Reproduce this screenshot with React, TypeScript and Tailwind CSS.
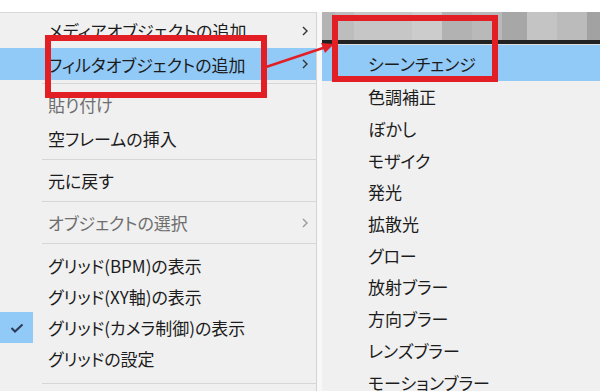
import type { ReactNode } from 'react';

const font = "font-['Noto_Sans_CJK_JP','Noto_Sans',sans-serif] [font-feature-settings:'palt']";

function Chevron({ dim }: { dim?: boolean }) {
  return (
    <svg width="8" height="11" viewBox="0 0 8 11" className="absolute left-[301px] top-1/2 -translate-y-1/2">
      <polyline points="2,1.5 6,5.5 2,9.5" fill="none" stroke={dim ? '#9a9a9a' : '#333'} strokeWidth="1.4" />
    </svg>
  );
}

function Item({ children, h, dim, hi, sub, check }: { children: ReactNode; h: string; dim?: boolean; hi?: boolean; sub?: boolean; check?: boolean }) {
  return (
    <div className={`relative shrink-0 flex items-center pl-[48px] ${h} ${hi ? 'bg-[#91c9f7]' : ''}`}>
      {check && (
        <div className="absolute left-0 top-0 bottom-0 w-[33px] bg-[#91c9f7] flex items-center justify-center">
          <svg width="14" height="10" viewBox="0 0 14 10">
            <polyline points="1.5,5 5,8.5 12.5,1.5" fill="none" stroke="#2b3a55" strokeWidth="2" />
          </svg>
        </div>
      )}
      <span className={`text-[17px] leading-none whitespace-nowrap ${dim ? 'text-[#6e6e6e]' : 'text-[#1c1c1c]'}`}>{children}</span>
      {sub && <Chevron dim={dim} />}
    </div>
  );
}

function Sep({ h, at }: { h: string; at: string }) {
  return (
    <div className={`relative shrink-0 ${h}`}>
      <div className={`absolute left-[42px] right-0 h-px bg-[#d7d7d7] ${at}`} />
    </div>
  );
}

const filters = ['色調補正', 'ぼかし', 'モザイク', '発光', '拡散光', 'グロー', '放射ブラー', '方向ブラー', 'レンズブラー', 'モーションブラー'];
const blocks = [
  ['w-[13px]', 'bg-[#b4b4b4]'],
  ['w-[19px]', 'bg-[#bdbdbd]'],
  ['w-[58px]', 'bg-[#c6c6c6]'],
  ['w-[30px]', 'bg-[#cccccc]'],
  ['w-[30px]', 'bg-[#b2b2b2]'],
  ['w-[30px]', 'bg-[#b9b9b9]'],
  ['w-[25px]', 'bg-[#a7a7a7]'],
  ['w-[30px]', 'bg-[#c4c4c4]'],
  ['w-[30px]', 'bg-[#bbbbbb]'],
  ['flex-1', 'bg-[#a2a2a2]'],
];

export default function App() {
  return (
    <div className={`relative w-[600px] h-[391px] overflow-hidden bg-white ${font}`}>
      <div className="h-[12px]" />
      <div className="flex h-[379px]">
        {/* main context menu */}
        <div className="w-[316px] bg-[#f0f0f0] border-t border-[#d9d9d9] flex flex-col">
          <Item h="h-[35px]" sub>メディアオブジェクトの追加</Item>
          <Item h="h-[32px]" hi sub>フィルタオブジェクトの追加</Item>
          <Sep h="h-[8px]" at="top-[3px]" />
          <Item h="h-[33px]" dim>貼り付け</Item>
          <Item h="h-[34px]">空フレームの挿入</Item>
          <Sep h="h-[9px]" at="top-[4px]" />
          <Item h="h-[33px]">元に戻す</Item>
          <Sep h="h-[9px]" at="top-[4px]" />
          <Item h="h-[33px]" dim sub>オブジェクトの選択</Item>
          <Sep h="h-[11px]" at="top-[4px]" />
          <Item h="h-[31px]">グリッド(BPM)の表示</Item>
          <Item h="h-[31px]">グリッド(XY軸)の表示</Item>
          <Item h="h-[31px]" check>グリッド(カメラ制御)の表示</Item>
          <Item h="h-[31px]">グリッドの設定</Item>
          <Sep h="h-[12px]" at="top-[9px]" />
        </div>
        <div className="w-px bg-[#d4d4d4]" />
        <div className="w-[5px] bg-[#f8f8f8]" />
        {/* filter submenu */}
        <div className="flex-1 bg-[#f0f0f0] flex flex-col overflow-hidden">
          <div className="flex h-[28px] shrink-0">
            {blocks.map(([w, c], i) => (
              <div key={i} className={`${w} ${c}`} />
            ))}
          </div>
          <div className="h-[4px] shrink-0 bg-[#222]" />
          <div className="h-[1px] shrink-0 bg-[#dcdcdc]" />
          <div className="h-[36px] shrink-0 bg-[#91c9f7] flex items-center pl-[46px]">
            <span className="text-[17px] leading-none text-[#1c1c1c]">シーンチェンジ</span>
          </div>
          {filters.map((f) => (
            <div key={f} className="h-[31.7px] shrink-0 flex items-center pl-[46px]">
              <span className="text-[17px] leading-none text-[#1c1c1c] whitespace-nowrap">{f}</span>
            </div>
          ))}
        </div>
      </div>

      {/* annotation boxes */}
      <div className="absolute left-[45px] top-[35px] w-[222px] h-[63px] border-[6px] border-[#e31f26]" />
      <div className="absolute left-[332px] top-[15px] w-[166px] h-[67px] border-[6px] border-[#e31f26]" />
      <svg className="absolute left-0 top-0" width="600" height="391" viewBox="0 0 600 391">
        <line x1="266" y1="67" x2="326" y2="47" stroke="#e31f26" strokeWidth="2.5" />
        <polygon points="334,44 321,43 325,53" fill="#e31f26" />
      </svg>
    </div>
  );
}
